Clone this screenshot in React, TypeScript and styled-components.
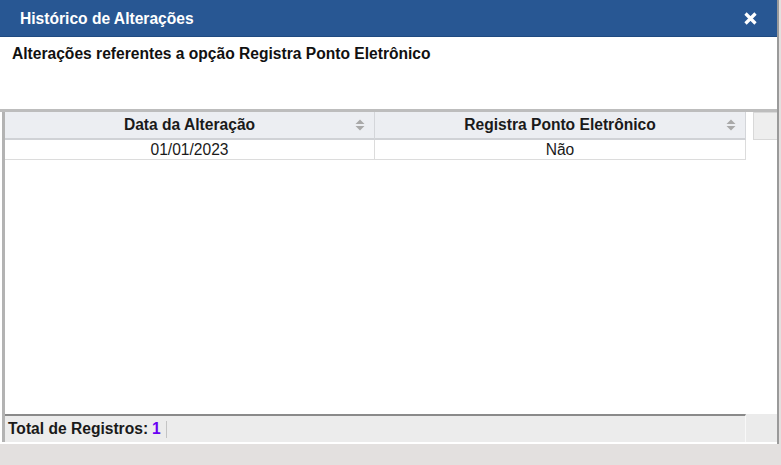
import React from "react";
import styled, { createGlobalStyle } from "styled-components";

const Global = createGlobalStyle`
  html, body { margin: 0; padding: 0; }
  body {
    background: #e3e0df;
    font-family: "Liberation Sans", Arial, sans-serif;
    width: 781px;
    height: 465px;
    overflow: hidden;
  }
`;

const FS = "15.6px";

const Dialog = styled.div`
  width: 779px;
  height: 444px;
  background: #ffffff;
  display: flex;
  flex-direction: column;
  border-right: 2px solid #9a9a9a;
  box-sizing: border-box;
`;

const TitleBar = styled.div`
  height: 37px;
  flex: none;
  background: #285793;
  display: flex;
  align-items: center;
  justify-content: space-between;
  padding: 1px 19px 0 20px;
  box-sizing: border-box;
  border-bottom: 1px solid #1f4a80;
`;

const Title = styled.span`
  color: #ffffff;
  font-size: ${FS};
  font-weight: bold;
`;

const CloseButton = styled.button`
  background: none;
  border: 0;
  padding: 0;
  width: 16px;
  height: 16px;
  display: flex;
  align-items: center;
  justify-content: center;
  cursor: pointer;
`;

const Subtitle = styled.div`
  height: 72px;
  flex: none;
  padding: 8px 12px 0;
  box-sizing: border-box;
  font-size: ${FS};
  font-weight: bold;
  color: #111111;
`;

const GridArea = styled.div`
  flex: 1;
  display: flex;
  flex-direction: column;
  border-top: 3px solid #bdbdbd;
  padding-left: 2px;
  padding-bottom: 2px;
  min-height: 0;
`;

const Grid = styled.div`
  flex: 1;
  display: flex;
  flex-direction: column;
  border-left: 3px solid #b3b3b3;
  min-height: 0;
`;

const HeaderRow = styled.div`
  height: 28px;
  flex: none;
  display: flex;
`;

const HeaderCell = styled.div<{ $w: number }>`
  width: ${(p) => p.$w}px;
  flex: none;
  position: relative;
  background: #eceef2;
  border-right: 1px solid #d4d6da;
  border-bottom: 2px solid #d0d2d6;
  box-sizing: border-box;
  display: flex;
  align-items: center;
  justify-content: center;
  font-size: ${FS};
  font-weight: bold;
  color: #1a1a1a;
`;

const SortIcon = styled.svg`
  position: absolute;
  right: 9px;
  top: 7px;
`;

const Gutter = styled.div`
  flex: 1;
  display: flex;
  justify-content: flex-end;
  background: #ffffff;
`;

const GutterBox = styled.div`
  width: 24px;
  background: #eeeeee;
  border: 1px solid #d8d8d8;
  border-right: 0;
  box-sizing: border-box;
`;

const Body = styled.div`
  flex: 1;
  display: flex;
  flex-direction: column;
  min-height: 0;
`;

const Row = styled.div`
  height: 20px;
  flex: none;
  display: flex;
`;

const Cell = styled.div<{ $w: number }>`
  width: ${(p) => p.$w}px;
  flex: none;
  border-right: 1px solid #dcdcdc;
  border-bottom: 1px solid #dcdcdc;
  box-sizing: border-box;
  display: flex;
  align-items: center;
  justify-content: center;
  font-size: ${FS};
  color: #1a1a1a;
`;

const Footer = styled.div`
  height: 28px;
  flex: none;
  display: flex;
`;

const FooterMain = styled.div`
  width: 741px;
  flex: none;
  background: #ececec;
  border-top: 2px solid #8a8a8a;
  border-right: 1px solid #f8f8f8;
  box-sizing: border-box;
  display: flex;
  align-items: center;
  padding-left: 3px;
  font-size: ${FS};
  font-weight: bold;
  color: #1a1a1a;
`;

const Count = styled.span`
  color: #6a00f4;
  margin-left: 4px;
`;

const Separator = styled.span`
  width: 1px;
  height: 17px;
  background: #c4c4c4;
  margin-left: 5px;
`;

const FooterGutter = styled.div`
  flex: 1;
  background: #ebebeb;
`;

const sortIcon = (
  <SortIcon width="10" height="12" viewBox="0 0 10 12">
    <path d="M5 0.5 L9.5 5 L0.5 5 Z" fill="#a9a9a9" />
    <path d="M0.5 7 L9.5 7 L5 11.5 Z" fill="#a9a9a9" />
  </SortIcon>
);

export default function App() {
  return (
    <>
      <Global />
      <Dialog>
        <TitleBar>
          <Title>Histórico de Alterações</Title>
          <CloseButton aria-label="Fechar">
            <svg width="13" height="13" viewBox="0 0 13 13">
              <path d="M1.5 1.5 L11.5 11.5 M11.5 1.5 L1.5 11.5" stroke="#ffffff" strokeWidth="3.2" strokeLinecap="butt" />
            </svg>
          </CloseButton>
        </TitleBar>
        <Subtitle>Alterações referentes a opção Registra Ponto Eletrônico</Subtitle>
        <GridArea>
          <Grid>
            <HeaderRow>
              <HeaderCell $w={370}>
                Data da Alteração
                {sortIcon}
              </HeaderCell>
              <HeaderCell $w={371}>
                Registra Ponto Eletrônico
                {sortIcon}
              </HeaderCell>
              <Gutter>
                <GutterBox />
              </Gutter>
            </HeaderRow>
            <Body>
              <Row>
                <Cell $w={370}>01/01/2023</Cell>
                <Cell $w={371}>Não</Cell>
              </Row>
            </Body>
            <Footer>
              <FooterMain>
                Total de Registros:<Count>1</Count>
                <Separator />
              </FooterMain>
              <FooterGutter />
            </Footer>
          </Grid>
        </GridArea>
      </Dialog>
    </>
  );
}
